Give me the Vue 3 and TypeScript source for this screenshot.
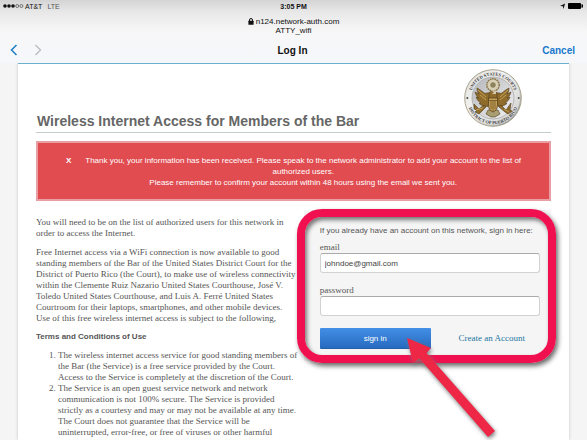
<script setup lang="ts">
import { ref } from 'vue'

const email = ref<string>('johndoe@gmail.com')
const password = ref<string>('')

const intro: string[][] = [
  ['You will need to be on the list of authorized users for this network in', 'order to access the Internet.'],
  [
    'Free Internet access via a WiFi connection is now available to good',
    'standing members of the Bar of the United States District Court for the',
    'District of Puerto Rico (the Court), to make use of wireless connectivity',
    'within the Clemente Ruiz Nazario United States Courthouse, José V.',
    'Toledo United States Courthouse, and Luis A. Ferré United States',
    'Courtroom for their laptops, smartphones, and other mobile devices.',
    'Use of this free wireless internet access is subject to the following,',
  ],
]

const terms: string[][] = [
  [
    'The wireless internet access service for good standing members of',
    'the Bar (the Service) is a free service provided by the Court.',
    'Access to the Service is completely at the discretion of the Court.',
  ],
  [
    'The Service is an open guest service network and network',
    'communication is not 100% secure. The Service is provided',
    'strictly as a courtesy and may or may not be available at any time.',
    'The Court does not guarantee that the Service will be',
    'uninterrupted, error-free, or free of viruses or other harmful',
  ],
]
</script>

<template>
  <div class="screen">
    <header class="chrome">
      <div class="status">
        <div class="carrier">
          <svg width="21" height="6" viewBox="0 0 21 6" aria-hidden="true">
            <g fill="#111"><circle cx="2" cy="3" r="1.8" /><circle cx="6" cy="3" r="1.8" /><circle cx="10" cy="3" r="1.8" /></g>
            <g fill="none" stroke="#555" stroke-width=".8"><circle cx="14.2" cy="3" r="1.5" /><circle cx="18.4" cy="3" r="1.5" /></g>
          </svg>
          <span>AT&amp;T</span><span class="lte">LTE</span>
        </div>
        <strong>3:05 PM</strong>
        <div class="power">
          <svg width="25" height="8" viewBox="0 0 25 8" aria-hidden="true">
            <path d="M1 4 6 1.500 4.600 7 3.800 4.300Z" fill="#111" />
            <rect x="9" y="1" width="13" height="6" rx="1" fill="#000" />
            <path d="M23 2.500q1.400 1.500 0 3Z" fill="#000" stroke="#000" />
          </svg>
        </div>
      </div>
      <div class="address">
        <div class="host">
          <svg width="6" height="7" viewBox="0 0 6 7" aria-hidden="true">
            <path d="M1.500 3V2a1.500 1.500 0 0 1 3 0v1" fill="none" stroke="#111" />
            <rect x=".4" y="2.8" width="5.2" height="4" rx=".5" fill="#111" />
          </svg>
          n124.network-auth.com
        </div>
        <div>ATTY_wifi</div>
      </div>
      <nav class="nav">
        <div class="arrows">
          <button type="button" aria-label="Back">
            <svg width="8" height="12" viewBox="0 0 8 12"><path d="M6.500 1 1.500 6l5 5" fill="none" stroke="#1b7cc4" stroke-width="1.5" /></svg>
          </button>
          <button type="button" aria-label="Forward">
            <svg width="8" height="12" viewBox="0 0 8 12"><path d="m1.500 1 5 5-5 5" fill="none" stroke="#b9bbbe" stroke-width="1.3" /></svg>
          </button>
        </div>
        <strong>Log In</strong>
        <button type="button" class="cancel">Cancel</button>
      </nav>
    </header>

    <main class="page">
      <div class="masthead">
        <h1>Wireless Internet Access for Members of the Bar</h1>
        <svg class="seal" width="60" height="60" viewBox="0 0 60 60" role="img" aria-label="Court seal">
          <defs>
            <linearGradient id="rim" x1="0" y1="0" x2="1" y2="1">
              <stop offset="0" stop-color="#c9c9c7" /><stop offset=".35" stop-color="#fafafa" />
              <stop offset=".65" stop-color="#d5d5d5" /><stop offset="1" stop-color="#777" />
            </linearGradient>
            <linearGradient id="field" x1="0" y1="0" x2="1" y2="1">
              <stop offset="0" stop-color="#b5b6ba" /><stop offset="1" stop-color="#f2f2f3" />
            </linearGradient>
            <path id="arc-top" d="M7.500 30a22.500 22.500 0 0 1 45 0" />
            <path id="arc-bottom" d="M3.800 30a26.200 26.200 0 0 0 52.400 0" />
          </defs>
          <circle cx="30" cy="30" r="28.3" fill="url(#rim)" stroke="#a8a38c" />
          <circle cx="30" cy="30" r="27" fill="#e9e9e8" opacity=".7" />
          <circle cx="30" cy="30" r="21" fill="url(#field)" stroke="#aaa" stroke-width=".8" />
          <g font-family="Liberation Serif, serif" font-size="4.5" font-weight="bold" fill="#3b3b3b" text-anchor="middle">
            <text><textPath href="#arc-top" startOffset="50%">UNITED STATES COURTS</textPath></text>
            <text><textPath href="#arc-bottom" startOffset="50%">DISTRICT OF PUERTO RICO</textPath></text>
          </g>
          <circle cx="4.3" cy="30" r="1" fill="#444" /><circle cx="55.7" cy="30" r="1" fill="#444" />
          <circle cx="30" cy="17" r="6.2" fill="#d3cdb9" stroke="#8a7443" stroke-width="1.5" stroke-dasharray="1.6 .7" />
          <circle cx="30" cy="17" r="3.4" fill="#8d8260" stroke="#eee4bd" />
          <g fill="#8f6b2c" stroke="#4e3d1d" stroke-width=".6" stroke-linejoin="round">
            <path d="M27 25c-2-1-4 1-6 0-2-2-5-4-7-5 0 3 1 5 2 6l-4-2c1 3 2 5 4 6l-3-1c1 3 3 5 5 6l-2 .4c2 2 5 3 9 3Z" />
            <path d="M33 25c2-1 4 1 6 0 2-2 5-4 7-5 0 3-1 5-2 6l4-2c-1 3-2 5-4 6l3-1c-1 3-3 5-5 6l2 .4c-2 2-5 3-9 3Z" />
            <path d="M26 28c0-5 2-5 4-5 3 0 4 1 4 5v3h-8Z" />
            <path d="m21 37-5 4-5-5 0 5 3 1-2 2 4 2 7-7ZM38 37l5 5 5-7-1 7 2 1-4 3-3-2-6-5Z" />
            <path d="m25 42-2 4 5 3h4l5-3-2-4Z" fill="#a99d72" />
          </g>
          <path d="m15 22 8 7m-6-2 6 5m22-10-8 7m6-2-6 5M13 42l7-2m21 1 5 3" stroke="#d1ae61" fill="none" stroke-width=".8" />
          <path d="M25.500 30h9v7c0 4-2 6-4.500 7-2.500-1-4.500-3-4.500-7Z" fill="#c7a057" stroke="#54411d" stroke-width=".8" />
          <path d="M25.500 32.500h9M28 33v8m2-8v10m2-10v8" stroke="#6b5125" stroke-width=".8" />
          <path d="m29 26 2-2-3-1 2-1 3 1v3Z" fill="#d4c7aa" />
        </svg>
      </div>

      <section class="alert" role="alert">
        <button type="button" aria-label="Dismiss">X</button>
        <p>
          Thank you, your information has been received. Please speak to the network administrator to add your account to the list of<br />
          authorized users.<br />
          Please remember to confirm your account within 48 hours using the email we sent you.
        </p>
      </section>

      <div class="columns">
        <article class="copy">
          <p v-for="(para, i) in intro" :key="i"><span v-for="line in para" :key="line">{{ line }} </span></p>
          <h2>Terms and Conditions of Use</h2>
          <ol>
            <li v-for="(item, i) in terms" :key="i"><span v-for="line in item" :key="line">{{ line }} </span></li>
          </ol>
        </article>

        <form class="login" @submit.prevent>
          <p>If you already have an account on this network, sign in here:</p>
          <label for="email">email</label>
          <input id="email" v-model="email" type="email" />
          <label for="password">password</label>
          <input id="password" v-model="password" type="password" />
          <div class="actions">
            <button type="submit">sign in</button>
            <a href="#">Create an Account</a>
          </div>
          <div class="highlight"></div>
          <svg class="pointer" width="100" height="110" viewBox="0 0 100 110" aria-hidden="true">
            <path d="m4 4 24 10-4.500 5L92 97l-7 6L16.500 24.500 10 29Z" fill="#ef2747" />
          </svg>
        </form>
      </div>
    </main>
  </div>
</template>

<style>
body {
  margin: 0;
}
</style>

<style scoped>
* {
  box-sizing: border-box;
}

.screen {
  display: flex;
  flex-direction: column;
  height: 100vh;
  overflow: hidden;
  background: #f5f5f6;
  font-family: "Liberation Sans", Arial, sans-serif;
  color: #555;
}

button {
  border: 0;
  padding: 0;
  background: none;
  font-family: inherit;
}

svg {
  display: block;
}

p,
h1,
h2,
ol {
  margin: 0;
}

.chrome {
  flex: none;
  color: #111;
  background: linear-gradient(#d4d4d4, #e8e8e8 12px, #f7f7f8 32px, #f6f7fb);
}

.status {
  display: grid;
  grid-template-columns: 1fr auto 1fr;
  align-items: center;
  height: 12px;
  padding: 0 3px;
  font-size: 7px;
}

.carrier {
  display: flex;
  align-items: center;
  gap: 1px;
}

.lte {
  margin-left: 4px;
  color: #555;
}

.power {
  justify-self: end;
}

.address {
  padding-top: 5px;
  font-size: 8px;
  line-height: 9px;
  text-align: center;
}

.host {
  display: flex;
  justify-content: center;
  align-items: center;
  gap: 2px;
}

.nav {
  display: grid;
  grid-template-columns: 1fr auto 1fr;
  align-items: center;
  height: 28px;
  padding: 2px 12px 0 10px;
  font-size: 10px;
}

.arrows {
  display: flex;
  gap: 16px;
}

.cancel {
  justify-self: end;
  font-size: 10px;
  font-weight: bold;
  color: #1779cc;
}

.page {
  flex: 1;
  min-height: 0;
  margin: 0 18px;
  padding: 0 18px;
  border-top: 1px solid #6cb0d0;
  background: #fff;
  box-shadow: 0 0 3px #c4c4c4;
  clip-path: inset(0 -4px);
}

.masthead {
  display: flex;
  justify-content: space-between;
  align-items: flex-end;
  height: 69px;
  padding: 0 28px 3px 1px;
  border-bottom: 1px solid #c5cecb;
}

h1 {
  font-size: 14px;
  line-height: 16px;
  color: #666;
  white-space: nowrap;
}

.seal {
  flex: none;
  margin-bottom: 1px;
}

.alert {
  display: flex;
  gap: 12px;
  height: 60px;
  margin-top: 8px;
  padding: 12px 26px 0 28px;
  border: 2px solid #e99ea3;
  background: #e14c51;
  color: #fff;
  font-size: 8px;
  line-height: 11px;
}

.alert button {
  height: 11px;
  font-size: 8px;
  font-weight: bold;
  color: #fff;
}

.alert p {
  flex: 1;
  text-align: center;
  white-space: nowrap;
}

.columns {
  display: flex;
  margin-top: 9px;
}

.copy {
  flex: 1;
  min-width: 0;
  padding-top: 7px;
  font-family: "Liberation Serif", serif;
  font-size: 9px;
  line-height: 11px;
  white-space: nowrap;
}

.copy span {
  display: block;
}

.copy p {
  margin-bottom: 8px;
}

.copy p + h2 {
  margin-top: -1px;
}

h2 {
  font-family: "Liberation Sans", Arial, sans-serif;
  font-size: 8px;
  line-height: 11px;
}

ol {
  margin-top: 8px;
  padding-left: 22px;
}

.login {
  position: relative;
  flex: 0 0 48%;
  height: 151px;
  padding: 15px 11px 0 16px;
  background: #f5f5f5;
  font-size: 8px;
  line-height: 11px;
}

.login p {
  white-space: nowrap;
}

.login label {
  display: block;
  margin-top: 6px;
  font-family: "Liberation Serif", serif;
  font-size: 9px;
}

.login input {
  display: block;
  width: 100%;
  height: 20px;
  padding: 0 4px;
  border: 1px solid #d2d2d2;
  border-top-color: #aaa;
  border-radius: 3px;
  background: #fff;
  font-family: inherit;
  font-size: 8px;
  color: #444;
}

.login input + label {
  margin-top: 12px;
}

.actions {
  display: flex;
  align-items: center;
  justify-content: space-between;
  margin-top: 12px;
  padding-right: 15px;
}

.actions button {
  flex: none;
  width: 54%;
  height: 21px;
  background: linear-gradient(#4390e6, #276bc0);
  border-bottom: 1px solid #2360a9;
  border-radius: 1px;
  color: #fff;
  font-size: 8px;
}

.actions a {
  font-family: "Liberation Serif", serif;
  font-size: 9px;
  color: #1b75a0;
  text-decoration: none;
}

.highlight {
  position: absolute;
  inset: -1px -5px -2px -7px;
  border: 8px solid #f0104f;
  border-radius: 25px;
  box-shadow: 2px 3px 5px #666, inset 2px 3px 4px #777;
  pointer-events: none;
}

.pointer {
  position: absolute;
  top: 124px;
  left: 99px;
  filter: drop-shadow(1px 2px 2px #777);
  pointer-events: none;
}
</style>
